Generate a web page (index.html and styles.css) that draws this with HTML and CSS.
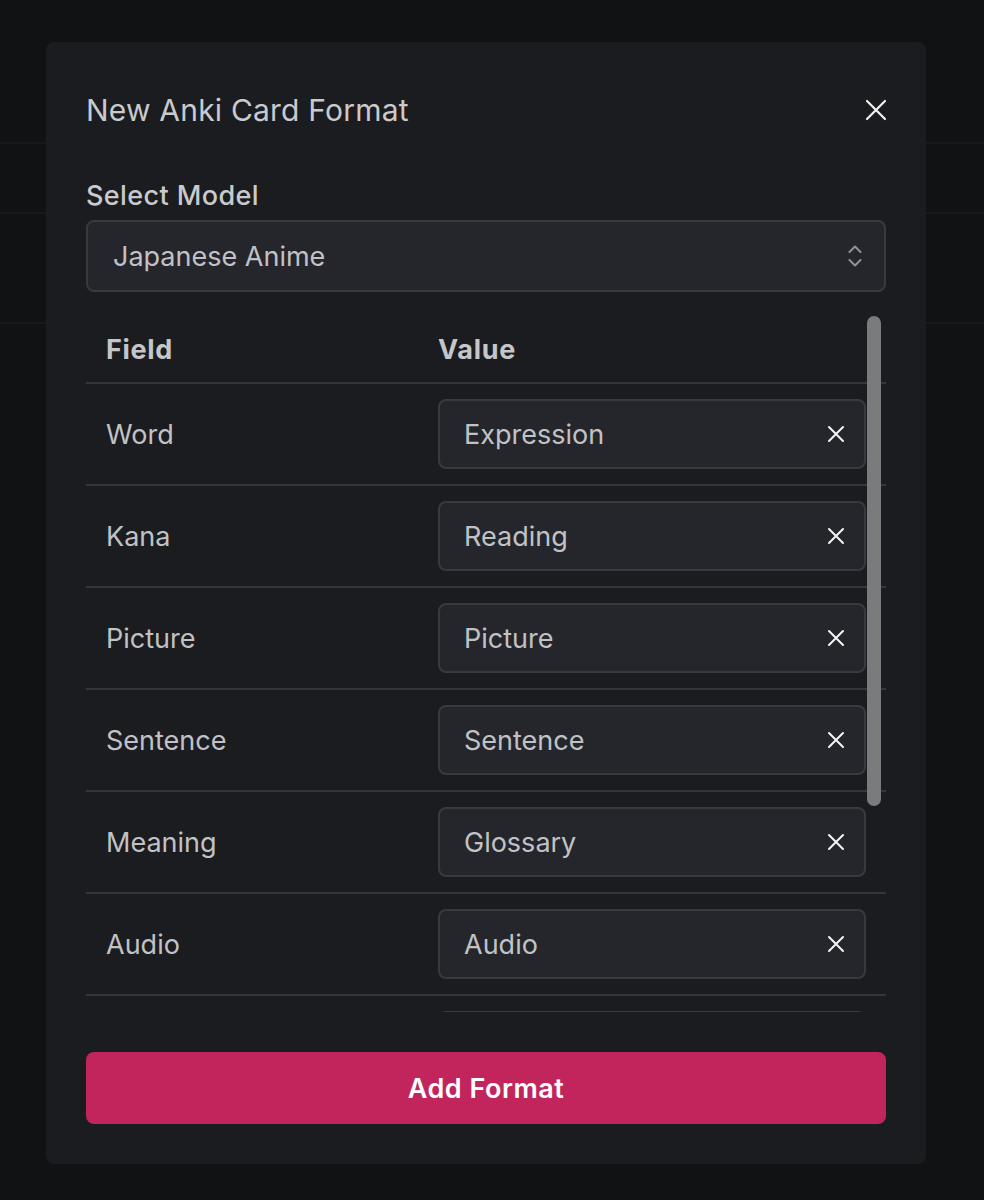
FILE: index.html
```html
<!DOCTYPE html>
<html lang="en">
<head>
<meta charset="utf-8">
<title>New Anki Card Format</title>
<link rel="stylesheet" href="styles.css">
</head>
<body>
<div class="page">
  <div class="bg-row bg-row-1"></div>
  <div class="bg-row bg-row-2"></div>
  <div class="bg-row bg-row-3"></div>
</div>

<div class="modal">
  <div class="modal-header">
    <h2 class="modal-title">New Anki Card Format</h2>
    <button class="close-btn" aria-label="Close">
      <svg width="22" height="22" viewBox="0 0 22 22"><path d="M2 2 L20 20 M20 2 L2 20" stroke="#f2f2f2" stroke-width="2.2" stroke-linecap="round" fill="none"/></svg>
    </button>
  </div>

  <label class="field-label">Select Model</label>
  <div class="select">
    <span class="select-value">Japanese Anime</span>
    <svg class="chevrons" width="14" height="24" viewBox="0 0 14 24"><path d="M1.5 8 L7 2.5 L12.5 8 M1.5 16 L7 21.5 L12.5 16" stroke="#909296" stroke-width="2" stroke-linecap="round" stroke-linejoin="round" fill="none"/></svg>
  </div>

  <div class="scroll-area">
    <div class="table">
      <div class="row head">
        <div class="cell">Field</div>
        <div class="cell">Value</div>
      </div>
      <div class="row">
        <div class="cell">Word</div>
        <div class="cell"><div class="value-input"><span>Expression</span><svg width="18" height="18" viewBox="0 0 18 18"><path d="M2 2 L16 16 M16 2 L2 16" stroke="#f4f4f4" stroke-width="2" stroke-linecap="round" fill="none"/></svg></div></div>
      </div>
      <div class="row">
        <div class="cell">Kana</div>
        <div class="cell"><div class="value-input"><span>Reading</span><svg width="18" height="18" viewBox="0 0 18 18"><path d="M2 2 L16 16 M16 2 L2 16" stroke="#f4f4f4" stroke-width="2" stroke-linecap="round" fill="none"/></svg></div></div>
      </div>
      <div class="row">
        <div class="cell">Picture</div>
        <div class="cell"><div class="value-input"><span>Picture</span><svg width="18" height="18" viewBox="0 0 18 18"><path d="M2 2 L16 16 M16 2 L2 16" stroke="#f4f4f4" stroke-width="2" stroke-linecap="round" fill="none"/></svg></div></div>
      </div>
      <div class="row">
        <div class="cell">Sentence</div>
        <div class="cell"><div class="value-input"><span>Sentence</span><svg width="18" height="18" viewBox="0 0 18 18"><path d="M2 2 L16 16 M16 2 L2 16" stroke="#f4f4f4" stroke-width="2" stroke-linecap="round" fill="none"/></svg></div></div>
      </div>
      <div class="row">
        <div class="cell">Meaning</div>
        <div class="cell"><div class="value-input"><span>Glossary</span><svg width="18" height="18" viewBox="0 0 18 18"><path d="M2 2 L16 16 M16 2 L2 16" stroke="#f4f4f4" stroke-width="2" stroke-linecap="round" fill="none"/></svg></div></div>
      </div>
      <div class="row">
        <div class="cell">Audio</div>
        <div class="cell"><div class="value-input"><span>Audio</span><svg width="18" height="18" viewBox="0 0 18 18"><path d="M2 2 L16 16 M16 2 L2 16" stroke="#f4f4f4" stroke-width="2" stroke-linecap="round" fill="none"/></svg></div></div>
      </div>
      <div class="row">
        <div class="cell"></div>
        <div class="cell"><div class="value-input"></div></div>
      </div>
    </div>
    <div class="scroll-thumb"></div>
  </div>

  <button class="primary-btn">Add Format</button>
</div>
</body>
</html>
```

FILE: styles.css
```css
* { box-sizing: border-box; }

html, body {
  margin: 0;
  padding: 0;
  background: #111214;
  font-family: Inter, "Noto Sans", "Liberation Sans", sans-serif;
  color: #c1c2c5;
}

.page {
  width: 984px;
  height: 1200px;
}

.bg-row {
  border-bottom: 2px solid #18191c;
}
.bg-row-1 { height: 144px; }
.bg-row-2 { height: 70px; }
.bg-row-3 { height: 110px; }

.modal {
  position: absolute;
  left: 46px;
  top: 42px;
  width: 880px;
  height: 1122px;
  padding: 40px;
  background: #1b1c1f;
  border-radius: 8px;
  display: flex;
  flex-direction: column;
}

.modal-header {
  height: 56px;
  display: flex;
  align-items: center;
  justify-content: space-between;
}

.modal-title {
  margin: 0;
  font-size: 30px;
  font-weight: 400;
  color: #c9cacd;
  letter-spacing: 0.2px;
}

.close-btn {
  background: none;
  border: 0;
  padding: 0;
  width: 22px;
  height: 22px;
  margin-right: -1px;
  display: flex;
}

.field-label {
  margin-top: 42px;
  height: 32px;
  line-height: 32px;
  font-size: 27px;
  font-weight: 500;
  letter-spacing: 0.4px;
  color: #c9cacd;
  margin-bottom: 8px;
}

.select {
  height: 72px;
  background: #25262b;
  border: 2px solid #373a40;
  border-radius: 8px;
  display: flex;
  align-items: center;
  justify-content: space-between;
  padding: 0 22px 0 25px;
}

.select-value {
  font-size: 27px;
  color: #c1c2c5;
}

.scroll-area {
  position: relative;
  margin-top: 24px;
  height: 696px;
  overflow: hidden;
}

.table {
  display: flex;
  flex-direction: column;
}

.row {
  display: grid;
  grid-template-columns: 332px 1fr;
  border-bottom: 2px solid #34363b;
  height: 102px;
  align-items: center;
}

.row.head {
  height: 68px;
  font-weight: 700;
}

.cell {
  padding: 0 20px;
  font-size: 27px;
  color: #c1c2c5;
}

.row.head .cell {
  color: #c5c6c9;
  letter-spacing: 0.7px;
}

.value-input {
  height: 70px;
  background: #25262b;
  border: 2px solid #373a40;
  border-radius: 8px;
  display: flex;
  align-items: center;
  justify-content: space-between;
  padding: 0 19px 0 24px;
}

.scroll-thumb {
  position: absolute;
  left: 781px;
  top: 0;
  width: 14px;
  height: 490px;
  border-radius: 7px;
  background: #7a7b7d;
}

.primary-btn {
  margin-top: 40px;
  height: 72px;
  border: 0;
  border-radius: 8px;
  background: #c2255c;
  color: #ffffff;
  font-family: Inter, "Noto Sans", "Liberation Sans", sans-serif;
  font-size: 27px;
  font-weight: 600;
  letter-spacing: 0.5px;
}
```
